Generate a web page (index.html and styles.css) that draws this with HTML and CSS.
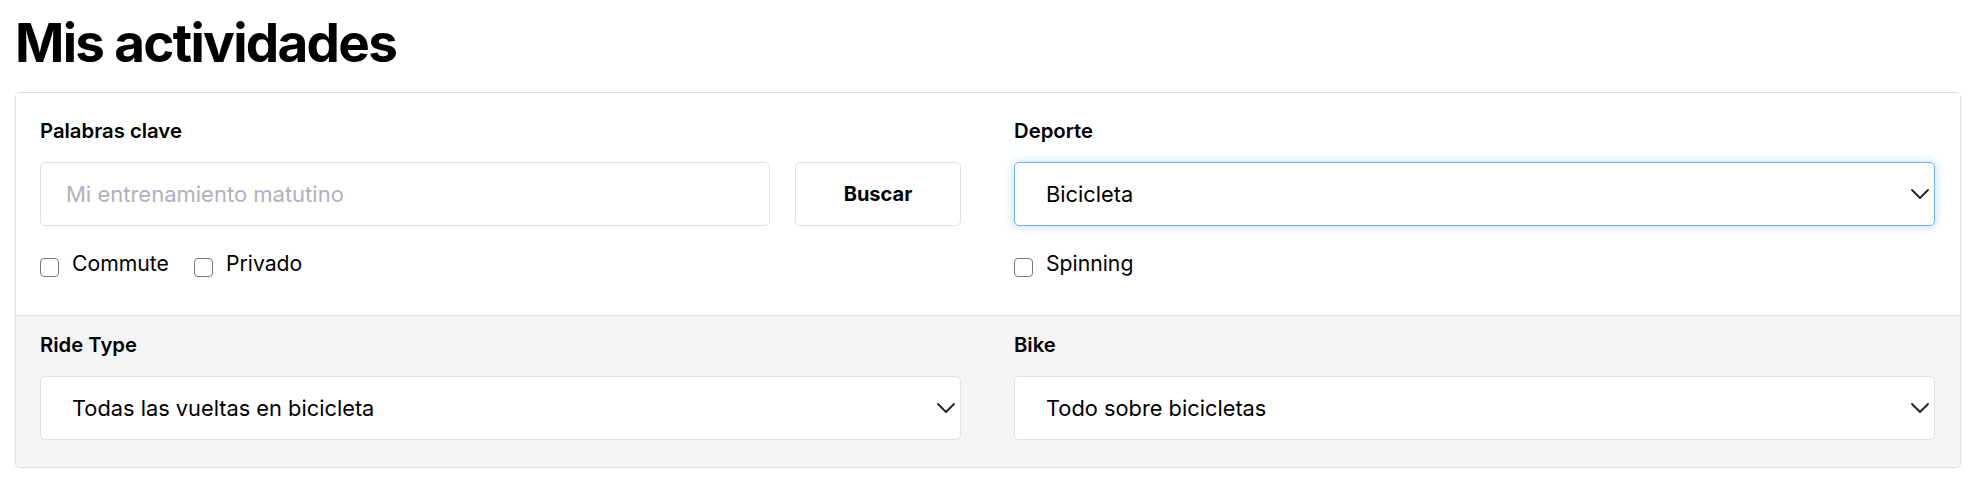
FILE: index.html
```html
<!DOCTYPE html>
<html lang="es">
<head>
<meta charset="utf-8">
<title>Mis actividades</title>
<link rel="stylesheet" href="styles.css">
</head>
<body>
<div class="page">
  <h1 class="title">Mis actividades</h1>
  <form class="card">
    <div class="section section-top">
      <div class="field">
        <label class="label" for="kw">Palabras clave</label>
        <div class="search-row">
          <input id="kw" class="text-input" type="text" placeholder="Mi entrenamiento matutino">
          <button class="btn" type="button">Buscar</button>
        </div>
        <div class="checks">
          <label class="check"><span class="box"></span><span class="check-text">Commute</span></label>
          <label class="check"><span class="box"></span><span class="check-text">Privado</span></label>
        </div>
      </div>
      <div class="field">
        <label class="label" for="sport">Deporte</label>
        <div class="select-wrap">
          <select id="sport" class="select select-focus"><option>Bicicleta</option></select>
          <svg class="chevron" viewBox="0 0 18 10" width="18" height="10"><polyline points="1,1 9,9 17,1" fill="none" stroke="#1f1f1f" stroke-width="1.8" stroke-linecap="round" stroke-linejoin="round"/></svg>
        </div>
        <div class="checks">
          <label class="check"><span class="box"></span><span class="check-text">Spinning</span></label>
        </div>
      </div>
    </div>
    <div class="section section-bottom">
      <div class="field">
        <label class="label" for="ride">Ride Type</label>
        <div class="select-wrap">
          <select id="ride" class="select"><option>Todas las vueltas en bicicleta</option></select>
          <svg class="chevron" viewBox="0 0 18 10" width="18" height="10"><polyline points="1,1 9,9 17,1" fill="none" stroke="#1f1f1f" stroke-width="1.8" stroke-linecap="round" stroke-linejoin="round"/></svg>
        </div>
      </div>
      <div class="field">
        <label class="label" for="bike">Bike</label>
        <div class="select-wrap">
          <select id="bike" class="select"><option>Todo sobre bicicletas</option></select>
          <svg class="chevron" viewBox="0 0 18 10" width="18" height="10"><polyline points="1,1 9,9 17,1" fill="none" stroke="#1f1f1f" stroke-width="1.8" stroke-linecap="round" stroke-linejoin="round"/></svg>
        </div>
      </div>
    </div>
  </form>
</div>
</body>
</html>
```
FILE: styles.css
```css
* { box-sizing: border-box; }
html, body { margin: 0; padding: 0; background: #ffffff; }
body { font-family: "Inter", "Liberation Sans", sans-serif; color: #000000; }

.page { padding: 0 17px 0 15px; }

.title {
  margin: 11px 0 17px 0;
  padding-left: 0;
  font-size: 53px;
  line-height: 64px;
  font-weight: 700;
  letter-spacing: -1.7px;
}

.card {
  border: 1px solid #dedede;
  border-radius: 5px;
  overflow: hidden;
  box-shadow: 0 1px 2px rgba(0, 0, 0, 0.06);
  margin: 0;
}

.section {
  display: grid;
  grid-template-columns: 1fr 1fr;
  column-gap: 53px;
  padding-left: 24px;
  padding-right: 25px;
}
.section-top { padding-top: 26px; padding-bottom: 38px; background: #ffffff; }
.section-bottom { padding-top: 17px; padding-bottom: 27px; background: #f4f4f4; border-top: 1px solid #e1e1e1; }
.section-bottom .label { margin-bottom: 19px; }

.field { display: flex; flex-direction: column; min-width: 0; }

.label {
  display: block;
  font-size: 20.3px;
  line-height: 24px;
  font-weight: 600;
  margin-bottom: 19px;
}

.search-row { display: flex; gap: 25px; }

.text-input {
  flex: 1;
  min-width: 0;
  height: 64px;
  border: 1px solid #dfdfe6;
  border-radius: 5px;
  padding: 0 0 0 25px;
  font-family: inherit;
  font-size: 22px;
  color: #000;
  background: #fff;
  outline: none;
}
.text-input::placeholder { color: #b2afc1; }

.btn {
  width: 166px;
  height: 64px;
  border: 1px solid #dfdfe6;
  border-radius: 5px;
  background: #fff;
  font-family: inherit;
  font-size: 20px;
  font-weight: 700;
  color: #000;
  padding: 0;
}

.select-wrap { position: relative; }
.select {
  display: block;
  width: 100%;
  height: 64px;
  -webkit-appearance: none;
  appearance: none;
  border: 1px solid #dfdfe6;
  border-radius: 5px;
  background: #ffffff;
  padding: 0 40px 0 31px;
  font-family: inherit;
  font-size: 21.8px;
  color: #000;
  outline: none;
}
.select-focus {
  border-color: #6cb2f2;
  box-shadow: 0 0 9px 1px rgba(90, 165, 240, 0.35);
}
.chevron {
  position: absolute;
  right: 6px;
  top: 27px;
  width: 18px;
  height: 10px;
  pointer-events: none;
}

.checks {
  display: flex;
  gap: 25px;
  margin-top: 24px;
}
.check {
  display: flex;
  align-items: flex-start;
  gap: 13px;
  font-size: 21.2px;
  line-height: 26px;
  font-weight: 400;
}
.box {
  width: 19px;
  height: 19px;
  margin-top: 8px;
  border: 1.5px solid #7a7a7a;
  border-radius: 4px;
  background: #fff;
  flex: none;
}
```
